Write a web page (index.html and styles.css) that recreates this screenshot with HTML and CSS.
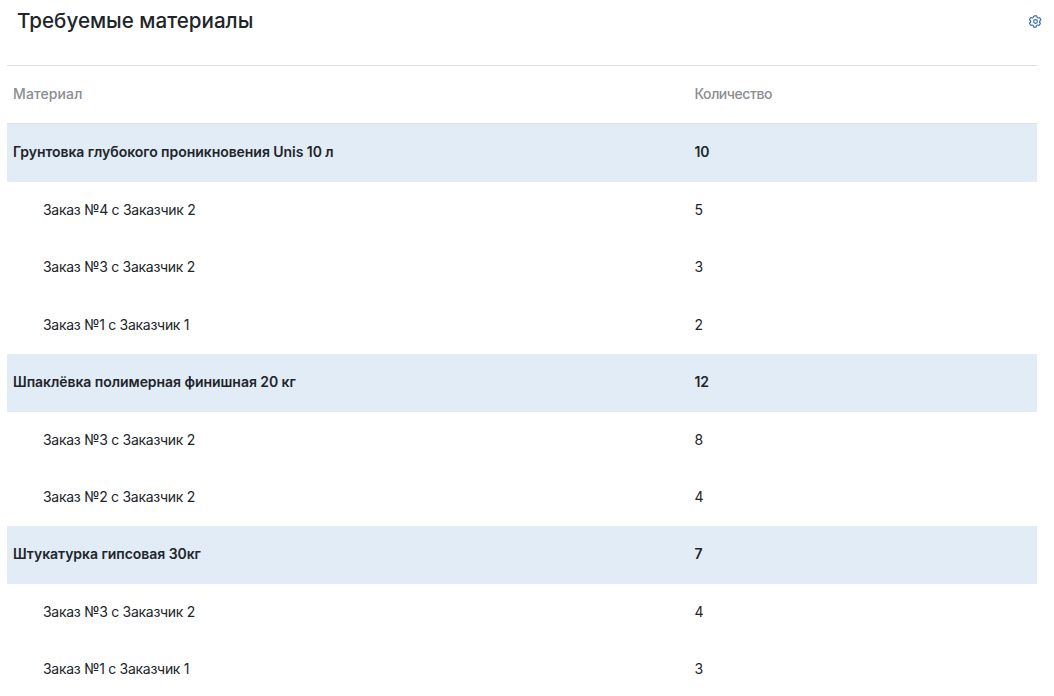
FILE: index.html
```html
<!DOCTYPE html>
<html lang="ru">
<head>
<meta charset="utf-8">
<title>Требуемые материалы</title>
<link rel="stylesheet" href="styles.css">
</head>
<body>
<div class="panel">
  <header class="panel-head">
    <h1 class="title">Требуемые материалы</h1>
    <svg class="gear" viewBox="0 0 24 24" fill="none" stroke="#2f6db5" stroke-width="1.8" stroke-linecap="round" stroke-linejoin="round"><path d="M9.594 3.94c.09-.542.56-.94 1.11-.94h2.593c.55 0 1.02.398 1.11.94l.213 1.281c.063.374.313.686.645.87.074.04.147.083.22.127.324.196.72.257 1.075.124l1.217-.456a1.125 1.125 0 011.37.49l1.296 2.247a1.125 1.125 0 01-.26 1.431l-1.003.827c-.293.24-.438.613-.431.992a6.759 6.759 0 010 .255c-.007.378-.138.75-.43.99l1.005.828c.424.35.534.954.26 1.43l-1.298 2.247a1.125 1.125 0 01-1.369.491l-1.217-.456c-.355-.133-.75-.072-1.076.124a6.57 6.57 0 01-.22.128c-.331.183-.581.495-.644.869l-.213 1.28c-.09.543-.56.941-1.11.941h-2.594c-.55 0-1.02-.398-1.11-.94l-.213-1.281c-.062-.374-.312-.686-.644-.87a6.52 6.52 0 01-.22-.127c-.325-.196-.72-.257-1.076-.124l-1.217.456a1.125 1.125 0 01-1.369-.49l-1.297-2.247a1.125 1.125 0 01.26-1.431l1.004-.827c.292-.24.437-.613.43-.992a6.932 6.932 0 010-.255c.007-.378-.138-.75-.43-.99l-1.004-.828a1.125 1.125 0 01-.26-1.43l1.297-2.247a1.125 1.125 0 011.37-.491l1.216.456c.356.133.751.072 1.076-.124.072-.044.146-.087.22-.128.332-.183.582-.495.644-.869l.214-1.281z"/><circle cx="12" cy="12" r="3"/></svg>
  </header>
  <table class="grid">
    <thead>
      <tr><th class="col-name">Материал</th><th class="col-qty">Количество</th></tr>
    </thead>
    <tbody>
      <tr class="group"><td>Грунтовка глубокого проникновения Unis 10 л</td><td>10</td></tr>
      <tr class="item"><td>Заказ №4 с Заказчик 2</td><td>5</td></tr>
      <tr class="item"><td>Заказ №3 с Заказчик 2</td><td>3</td></tr>
      <tr class="item"><td>Заказ №1 с Заказчик 1</td><td>2</td></tr>
      <tr class="group"><td>Шпаклёвка полимерная финишная 20 кг</td><td>12</td></tr>
      <tr class="item"><td>Заказ №3 с Заказчик 2</td><td>8</td></tr>
      <tr class="item"><td>Заказ №2 с Заказчик 2</td><td>4</td></tr>
      <tr class="group"><td>Штукатурка гипсовая 30кг</td><td>7</td></tr>
      <tr class="item"><td>Заказ №3 с Заказчик 2</td><td>4</td></tr>
      <tr class="item"><td>Заказ №1 с Заказчик 1</td><td>3</td></tr>
    </tbody>
  </table>
</div>
</body>
</html>
```
FILE: styles.css
```css
html, body {
  margin: 0;
  padding: 0;
  height: 100%;
  overflow: hidden;
  background: #fff;
}
body {
  font-family: Inter, "Noto Sans", sans-serif;
  color: #212529;
}
.panel {
  padding: 0 17px 0 7px;
}
.panel-head {
  display: flex;
  justify-content: space-between;
  align-items: flex-start;
  height: 65px;
  padding-left: 10px;
  box-sizing: border-box;
}
.title {
  margin: 6px 0 0;
  font-size: 20.6px;
  line-height: 29px;
  font-weight: 500;
  color: #212529;
}
.gear {
  width: 15px;
  height: 15px;
  margin: 14px -6px 0 0;
}
.grid {
  width: 100%;
  border-collapse: separate;
  border-spacing: 0;
  table-layout: fixed;
  border-top: 1px solid #dee2e6;
  font-size: 14px;
}
.grid th {
  height: 58px;
  padding: 0 6px 2px;
  box-sizing: border-box;
  text-align: left;
  font-weight: 500;
  color: #8a8d91;
  border-bottom: 1px solid #dee2e6;
}
.col-name {
  width: 681.5px;
  letter-spacing: 0.1px;
}
.col-qty {
  letter-spacing: -0.45px;
}
.grid td {
  padding: 0 6px;
  box-sizing: border-box;
}
.group td {
  height: 58px;
  padding-bottom: 3px;
  background: #e2ecf7;
  font-weight: 600;
  letter-spacing: -0.05px;
}
.item td {
  height: 57.2px;
  padding-bottom: 1.6px;
}
.item td:first-child {
  padding-left: 36px;
  letter-spacing: -0.28px;
}
```
